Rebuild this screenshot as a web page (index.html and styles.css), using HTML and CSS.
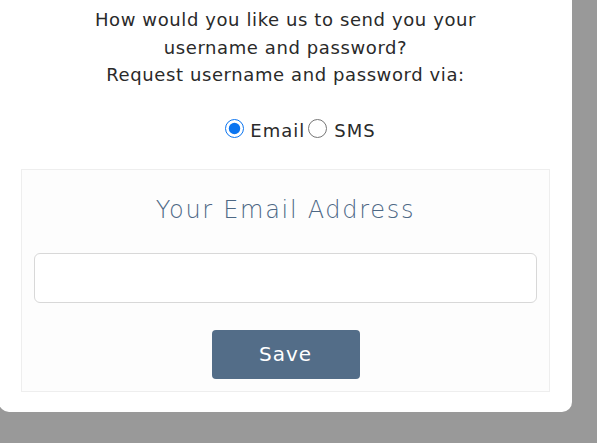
FILE: index.html
```html
<!DOCTYPE html>
<html>
<head>
<meta charset="utf-8">
<link rel="stylesheet" href="styles.css">
</head>
<body>
<div class="card">
  <p class="intro">How would you like us to send you your<br>username and password?<br>Request username and password via:</p>
  <div class="choices">
    <label class="choice"><input type="radio" name="via" checked><span>Email</span></label>
    <label class="choice"><input type="radio" name="via"><span>SMS</span></label>
  </div>
  <div class="panel">
    <h2 class="panel-title">Your Email Address</h2>
    <input class="field" type="text">
    <div class="actions"><button class="save">Save</button></div>
  </div>
</div>
</body>
</html>
```
FILE: styles.css
```css
html, body {
  margin: 0;
  padding: 0;
  background: #999999;
  height: 443px;
  overflow: hidden;
  font-family: "DejaVu Sans", "Open Sans", sans-serif;
}
.card {
  background: #ffffff;
  width: 573px;
  margin-left: -1px;
  box-sizing: border-box;
  padding: 6px 22px 20px;
  border-radius: 0 0 10px 10px;
}
.intro {
  margin: 0;
  text-align: center;
  font-size: 18px;
  line-height: 27.5px;
  color: #2a2a2a;
  letter-spacing: 0.6px;
}
.choices {
  display: flex;
  justify-content: center;
  align-items: center;
  margin-top: 28px;
  padding-left: 30px;
  height: 28px;
  font-size: 18px;
  color: #2a2a2a;
  letter-spacing: 1px;
}
.choice {
  display: flex;
  align-items: center;
}
.choice input {
  width: 19px;
  height: 19px;
  margin: 0 6px 5px 0;
  accent-color: #0a74f0;
}
.choice + .choice {
  margin-left: 3px;
}
.choice + .choice input {
  margin-right: 7px;
}
.panel {
  margin-top: 24px;
  border: 1px solid #eeeeee;
  background: #fdfdfd;
  padding: 0 12px 12px;
  height: 223px;
  box-sizing: border-box;
}
.panel-title {
  margin: 25px 0 0;
  text-align: center;
  font-size: 24px;
  font-weight: 300;
  line-height: 30px;
  color: #4d6885;
  letter-spacing: 1.7px;
}
.field {
  display: block;
  width: 100%;
  box-sizing: border-box;
  height: 50px;
  margin-top: 28px;
  border: 1px solid #d8d8d8;
  border-radius: 6px;
  background: #ffffff;
}
.actions {
  display: flex;
  justify-content: center;
  margin-top: 27px;
}
.save {
  width: 148px;
  height: 49px;
  border: none;
  border-radius: 4px;
  background: #536d88;
  color: #ffffff;
  font-family: inherit;
  font-size: 20px;
  letter-spacing: 1px;
}
```
